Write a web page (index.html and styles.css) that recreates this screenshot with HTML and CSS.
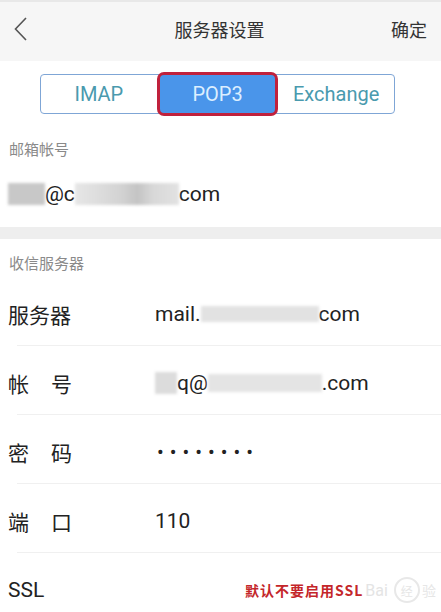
FILE: index.html
```html
<!DOCTYPE html>
<html lang="zh">
<head>
<meta charset="utf-8">
<link rel="stylesheet" href="styles.css">
</head>
<body>
<div class="page">
  <header class="topbar">
    <svg class="back" width="14" height="26" viewBox="0 0 14 26"><polyline points="12,2 1.5,13 12,24" fill="none" stroke="#555" stroke-width="1.6"/></svg>
    <div class="title">服务器设置</div>
    <div class="ok">确定</div>
  </header>

  <div class="tabs-wrap">
    <div class="tabs">
      <div class="tab">IMAP</div>
      <div class="tab active">POP3</div>
      <div class="tab">Exchange</div>
    </div>
  </div>

  <div class="section-label first">邮箱帐号</div>
  <div class="account">
    <span class="blur b1"></span><span class="txt">@c</span><span class="blur b2"></span><span class="txt">com</span>
  </div>

  <div class="band"></div>

  <div class="section-label second">收信服务器</div>

  <div class="row">
    <div class="label three">服务器</div>
    <div class="value"><span class="txt">mail.</span><span class="blur b3"></span><span class="txt">com</span></div>
  </div>
  <div class="row">
    <div class="label spread"><span>帐</span><span>号</span></div>
    <div class="value"><span class="blur b4"></span><span class="txt">q@</span><span class="blur b5"></span><span class="txt">.com</span></div>
  </div>
  <div class="row">
    <div class="label spread"><span>密</span><span>码</span></div>
    <div class="value dots">••••••••</div>
  </div>
  <div class="row">
    <div class="label spread"><span>端</span><span>口</span></div>
    <div class="value">110</div>
  </div>
  <div class="row last">
    <div class="label ssl">SSL</div>
    <div class="note">默认不要启用SSL</div>
    <div class="watermark"><span class="wm-bai">Bai</span><span class="wm-circle">经</span><span class="wm-line">验</span></div>
  </div>
</div>
</body>
</html>
```

FILE: styles.css
```css
html, body {
  margin: 0;
  padding: 0;
  background: #ffffff;
}
.page {
  width: 441px;
  height: 612px;
  overflow: hidden;
  font-family: Roboto, "Noto Sans CJK SC", sans-serif;
  color: #222;
}
.topbar {
  background: #f6f6f6;
  border-top: 2px solid #e8e8e8;
  display: flex;
  align-items: center;
  padding: 0 14px 6px 14px;
  box-sizing: border-box;
  height: 61px;
}
.back {
  display: block;
}
.title {
  flex: 1;
  text-align: center;
  font-family: "Noto Sans CJK SC", sans-serif;
  font-size: 18px;
  color: #333;
  padding-left: 20px;
}
.ok {
  font-family: "Noto Sans CJK SC", sans-serif;
  font-size: 18px;
  color: #333;
}
.tabs-wrap {
  padding: 13px 0 0 40px;
}
.tabs {
  width: 353px;
  height: 38px;
  border: 1px solid #7fa6d6;
  border-radius: 4px;
  display: flex;
}
.tab {
  flex: 1;
  display: flex;
  align-items: center;
  justify-content: center;
  font-family: Roboto, sans-serif;
  font-size: 20px;
  color: #4a9aae;
}
.tab.active {
  background: #4a95ea;
  color: #dcefff;
  border: 3px solid #c0213c;
  border-radius: 7px;
  margin: -3px 0;
}
.section-label {
  font-family: "Noto Sans CJK SC", sans-serif;
  font-size: 15px;
  color: #8a8a8a;
  padding-left: 9px;
  line-height: 20px;
}
.section-label.first {
  margin-top: 25px;
}
.account {
  display: flex;
  align-items: center;
  height: 30px;
  margin-top: 20px;
  padding-left: 8px;
}
.txt {
  font-size: 21px;
  color: #222;
}
.blur {
  display: inline-block;
  height: 22px;
  background: #cfcfcf;
  filter: blur(1.5px);
}
.b1 { width: 37px; background: #c8c8c8; }
.b2 { width: 104px; background: linear-gradient(90deg, #e6e6e6 0%, #dedede 20%, #d2d2d2 45%, #c4c4c4 60%, #d8d8d8 75%, #e2e2e2 100%); }
.b3 { width: 118px; background: #e2e2e2; height: 16px; }
.b4 { width: 22px; background: #dcdcdc; }
.b5 { width: 114px; background: #e4e4e4; height: 18px; }
.band {
  height: 12px;
  background: #eeeeee;
  margin-top: 18px;
}
.section-label.second {
  margin-top: 14px;
  margin-bottom: 4px;
}
.row {
  height: 69px;
  display: flex;
  align-items: center;
  padding-left: 8px;
  padding-top: 5px;
  box-sizing: border-box;
  background: linear-gradient(#f0f0f0, #f0f0f0) no-repeat 17px 100% / calc(100% - 17px) 1px;
}
.label {
  width: 147px;
  flex: none;
  font-family: "Noto Sans CJK SC", sans-serif;
  font-size: 21px;
  color: #222;
}
.label.spread {
  display: flex;
  justify-content: space-between;
  width: 64px;
  margin-right: 83px;
}
.label.ssl {
  font-family: Roboto, sans-serif;
  font-size: 21px;
  width: 237px;
}
.value {
  display: flex;
  align-items: center;
  font-size: 21px;
  color: #222;
}
.dots {
  letter-spacing: 6px;
  font-size: 20px;
  padding-left: 2px;
}
.note {
  font-family: "Noto Sans CJK SC", sans-serif;
  font-size: 14px;
  color: #c4262a;
  letter-spacing: 1px;
  font-weight: bold;
}
.watermark {
  display: flex;
  align-items: center;
  margin-left: 2px;
  color: #e6e6e6;
  font-size: 16px;
  font-family: "Noto Sans CJK SC", sans-serif;
}
.wm-bai {
  font-family: Roboto, sans-serif;
  color: #e4e4e4;
}
.wm-circle {
  margin-left: 6px;
  width: 22px;
  height: 22px;
  border: 2px solid #e8e8e8;
  border-radius: 50%;
  display: flex;
  align-items: center;
  justify-content: center;
  font-size: 12px;
}
.wm-line {
  margin-left: 2px;
  font-size: 14px;
}
.row.last {
  background: none;
}
```
